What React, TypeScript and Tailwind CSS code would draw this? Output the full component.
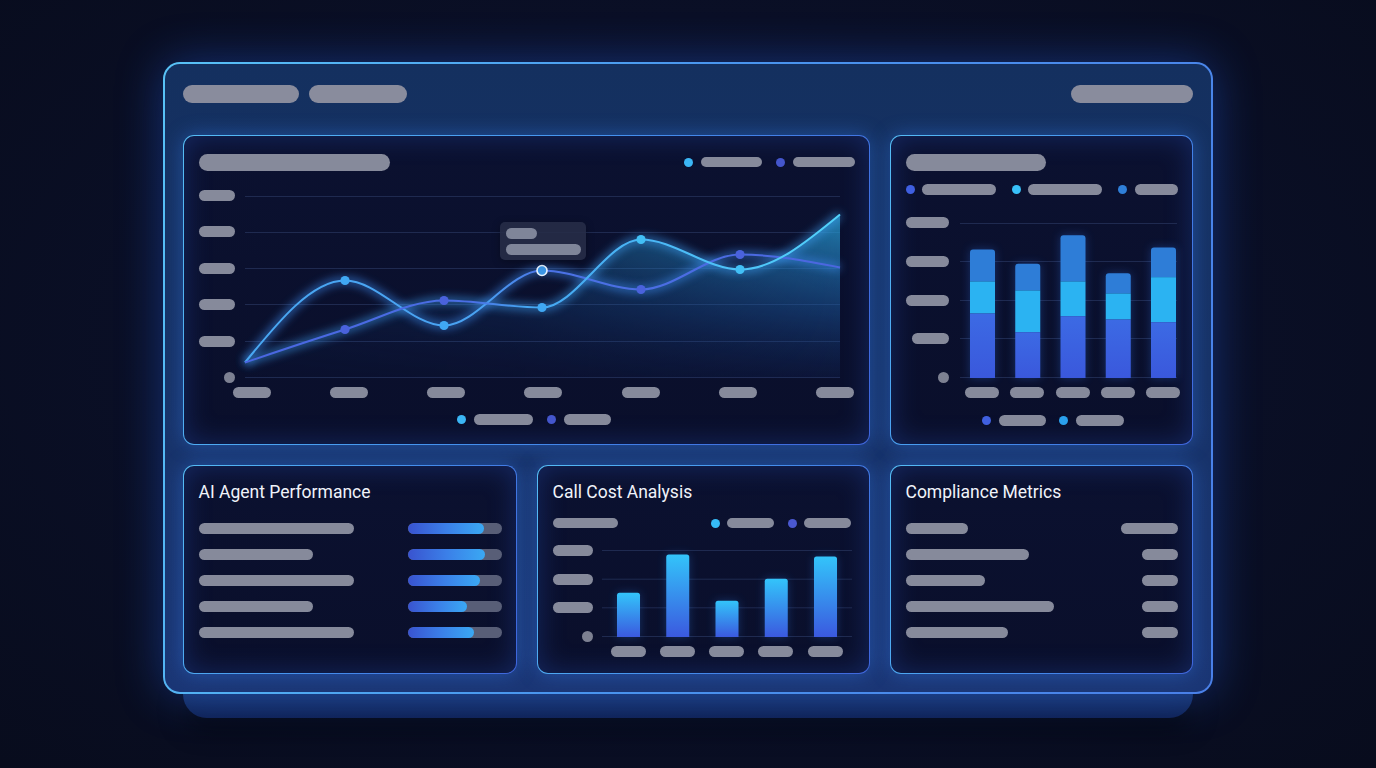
import React from "react";

type Pt = [number, number];

function monotonePath(pts: Pt[]): string {
  const n = pts.length;
  const t: number[] = new Array(n).fill(0);
  const slope = (i: number) => (pts[i + 1][1] - pts[i][1]) / (pts[i + 1][0] - pts[i][0]);
  for (let i = 1; i < n - 1; i++) {
    const h0 = pts[i][0] - pts[i - 1][0];
    const h1 = pts[i + 1][0] - pts[i][0];
    const s0 = slope(i - 1);
    const s1 = slope(i);
    const p = (s0 * h1 + s1 * h0) / (h0 + h1);
    t[i] = (Math.sign(s0) + Math.sign(s1)) * Math.min(Math.abs(s0), Math.abs(s1), 0.5 * Math.abs(p)) || 0;
  }
  t[0] = (3 * slope(0) - t[1]) / 2;
  t[n - 1] = (3 * slope(n - 2) - t[n - 2]) / 2;
  let d = `M${pts[0][0]},${pts[0][1]}`;
  for (let i = 0; i < n - 1; i++) {
    const [x0, y0] = pts[i];
    const [x1, y1] = pts[i + 1];
    const dx = (x1 - x0) / 3;
    d += ` C${x0 + dx},${y0 + dx * t[i]} ${x1 - dx},${y1 - dx * t[i + 1]} ${x1},${y1}`;
  }
  return d;
}

const LINE_A: Pt[] = [
  [0, 172.5],
  [100, 90.5],
  [199, 135.5],
  [297, 80.5],
  [396, 99.5],
  [495, 64.5],
  [595, 77.5],
];
const LINE_B: Pt[] = [
  [0, 172.5],
  [100, 139.5],
  [199, 110.5],
  [297, 117.5],
  [396, 49.5],
  [495, 79.5],
  [595, 24.5],
];

const pill = "rounded-full bg-[#868a9b]";

function Dot({ c }: { c: string }) {
  return <span className={`block h-[9px] w-[9px] shrink-0 rounded-full ${c}`} />;
}

function Panel({ className, children }: { className: string; children: React.ReactNode }) {
  return (
    <div
      className={`rounded-[11px] border-[1.5px] border-transparent [background:linear-gradient(180deg,#0b1130,#0a0f2b)_padding-box,linear-gradient(115deg,#55bdf5,#4592ee_50%,#3f66dc)_border-box] shadow-[0_0_20px_rgba(56,130,246,0.4),inset_0_0_28px_rgba(45,95,220,0.3)] ${className}`}
    >
      {children}
    </div>
  );
}

function LineChart() {
  const a = monotonePath(LINE_A);
  const b = monotonePath(LINE_B);
  const grid = [6.5, 42.5, 78.5, 114.5, 151.5, 187.5];
  return (
    <svg className="absolute inset-0 overflow-visible" width={595} height={193} viewBox="0 0 595 193">
      <defs>
        <linearGradient id="strokeA" gradientUnits="userSpaceOnUse" x1="0" y1="0" x2="595" y2="0">
          <stop offset="0" stopColor="#49a8f3" />
          <stop offset="0.4" stopColor="#49a2f2" />
          <stop offset="0.5" stopColor="#4b72e6" />
          <stop offset="1" stopColor="#4b66df" />
        </linearGradient>
        <linearGradient id="strokeB" gradientUnits="userSpaceOnUse" x1="0" y1="0" x2="595" y2="0">
          <stop offset="0" stopColor="#4a66e2" />
          <stop offset="0.38" stopColor="#4a6ee4" />
          <stop offset="0.47" stopColor="#45a6f2" />
          <stop offset="1" stopColor="#52d2fb" />
        </linearGradient>
        <linearGradient id="areaV" x1="0" y1="0" x2="0" y2="1">
          <stop offset="0" stopColor="#2aa6dc" stopOpacity="0.75" />
          <stop offset="0.6" stopColor="#1d5fa8" stopOpacity="0.45" />
          <stop offset="1" stopColor="#173a80" stopOpacity="0.15" />
        </linearGradient>
        <linearGradient id="areaH" x1="0" y1="0" x2="1" y2="0">
          <stop offset="0" stopColor="#fff" stopOpacity="0.15" />
          <stop offset="0.45" stopColor="#fff" stopOpacity="0.35" />
          <stop offset="1" stopColor="#fff" stopOpacity="1" />
        </linearGradient>
        <mask id="areaMask">
          <rect x="0" y="0" width="595" height="193" fill="url(#areaH)" />
        </mask>
        <filter id="glow" x="-10%" y="-40%" width="120%" height="180%">
          <feGaussianBlur stdDeviation="4" />
        </filter>
      </defs>
      {grid.map((y) => (
        <line key={y} x1="0" x2="595" y1={y} y2={y} stroke="#1f2a50" strokeWidth="1" />
      ))}
      <path d={`${b} L595,187.5 L0,187.5 Z`} fill="url(#areaV)" mask="url(#areaMask)" />
      <path d={a} fill="none" stroke="#3d8cf0" strokeWidth="7" opacity="0.6" filter="url(#glow)" />
      <path d={b} fill="none" stroke="#3d9cf0" strokeWidth="7" opacity="0.6" filter="url(#glow)" />
      <path d={a} fill="none" stroke="url(#strokeA)" strokeWidth="2" />
      <path d={b} fill="none" stroke="url(#strokeB)" strokeWidth="2" />
      <circle cx="100" cy="90.5" r="4.6" fill="#40a8f3" />
      <circle cx="199" cy="135.5" r="4.6" fill="#40a8f3" />
      <circle cx="396" cy="99.5" r="4.6" fill="#4a62dc" />
      <circle cx="495" cy="64.5" r="4.6" fill="#4a62dc" />
      <circle cx="100" cy="139.5" r="4.6" fill="#4a62dc" />
      <circle cx="199" cy="110.5" r="4.6" fill="#4a62dc" />
      <circle cx="297" cy="117.5" r="4.6" fill="#40a8f3" />
      <circle cx="396" cy="49.5" r="4.6" fill="#42c0f6" />
      <circle cx="495" cy="79.5" r="4.6" fill="#42c0f6" />
      <circle cx="297" cy="80.5" r="5" fill="#3b96e6" stroke="#e6f2ff" strokeWidth="1.6" />
    </svg>
  );
}

function roundTop(x: number, top: number, w: number, bottom: number, r: number) {
  return `M${x},${bottom} V${top + r} Q${x},${top} ${x + r},${top} H${x + w - r} Q${x + w},${top} ${x + w},${top + r} V${bottom} Z`;
}

const STACKS = [
  { x: 10, top: 32.5, c: 64.5, b: 96.5 },
  { x: 55.25, top: 46.8, c: 73.5, b: 115.2 },
  { x: 100.5, top: 18.2, c: 64.5, b: 99.2 },
  { x: 145.75, top: 56.2, c: 76.5, b: 102.5 },
  { x: 191, top: 30.5, c: 60.2, b: 105.2 },
];

function StackedChart() {
  const grid = [6.5, 44.5, 83.5, 121.5, 160.5];
  return (
    <svg className="absolute inset-0 overflow-visible" width={217} height={166} viewBox="0 0 217 166">
      <defs>
        <linearGradient id="stackBottom" x1="0" y1="0" x2="0" y2="1">
          <stop offset="0" stopColor="#3c6ae4" />
          <stop offset="1" stopColor="#3a58dc" />
        </linearGradient>
        <filter id="barGlow" x="-50%" y="-20%" width="200%" height="140%">
          <feGaussianBlur stdDeviation="5" />
        </filter>
      </defs>
      {grid.map((y) => (
        <line key={y} x1="0" x2="217" y1={y} y2={y} stroke="#1f2a50" strokeWidth="1" />
      ))}
      {STACKS.map((s, i) => (
        <g key={i}>
          <rect x={s.x} y={s.top} width="25" height={161 - s.top} fill="#2f6fe0" opacity="0.35" filter="url(#barGlow)" />
          <path d={roundTop(s.x, s.top, 25, s.c, 3)} fill="#2e7dd7" />
          <rect x={s.x} y={s.c} width="25" height={s.b - s.c} fill="#2bb3f2" />
          <rect x={s.x} y={s.b} width="25" height={161 - s.b} fill="url(#stackBottom)" />
        </g>
      ))}
    </svg>
  );
}

const COST_BARS = [
  { x: 15, top: 47.8 },
  { x: 64.25, top: 9.5 },
  { x: 113.5, top: 55.8 },
  { x: 162.75, top: 33.8 },
  { x: 212, top: 11.5 },
];

function CostChart() {
  const grid = [5.5, 34.2, 62.8, 91.5];
  return (
    <svg className="absolute inset-0 overflow-visible" width={250} height={97} viewBox="0 0 250 97">
      <defs>
        <linearGradient id="costBar" x1="0" y1="0" x2="0" y2="1">
          <stop offset="0" stopColor="#33c4fa" />
          <stop offset="1" stopColor="#3b59df" />
        </linearGradient>
        <filter id="costGlow" x="-50%" y="-20%" width="200%" height="140%">
          <feGaussianBlur stdDeviation="5" />
        </filter>
      </defs>
      {grid.map((y) => (
        <line key={y} x1="0" x2="250" y1={y} y2={y} stroke="#1f2a50" strokeWidth="1" />
      ))}
      {COST_BARS.map((b, i) => (
        <g key={i}>
          <rect x={b.x} y={b.top} width="23" height={92 - b.top} fill="#2f7fe8" opacity="0.3" filter="url(#costGlow)" />
          <path d={roundTop(b.x, b.top, 23, 92, 2.5)} fill="url(#costBar)" />
        </g>
      ))}
    </svg>
  );
}

function TrendPanel() {
  return (
    <Panel className="col-span-2 h-[310px] px-[14.5px] pt-[17.5px]">
      <div className="flex h-[17px] items-center justify-between">
        <div className={`h-[17px] w-[191px] ${pill}`} />
        <div className="flex items-center">
          <Dot c="bg-[#3bb6f5]" />
          <div className={`ml-[7.5px] h-[10.5px] w-[61px] ${pill}`} />
          <span className="ml-[14.5px]" />
          <Dot c="bg-[#4456cc]" />
          <div className={`ml-[7.5px] h-[10.5px] w-[62px] ${pill}`} />
        </div>
      </div>
      <div className="mt-[19.5px] flex h-[193px]">
        <div className="flex w-[36px] flex-col items-end justify-between">
          <div className={`h-[11px] w-[36px] ${pill}`} />
          <div className={`h-[11px] w-[36px] ${pill}`} />
          <div className={`h-[11px] w-[36px] ${pill}`} />
          <div className={`h-[11px] w-[36px] ${pill}`} />
          <div className={`h-[11px] w-[36px] ${pill}`} />
          <div className="h-[11px] w-[11px] rounded-full bg-[#7d8192]" />
        </div>
        <div className="relative ml-[10px] h-[193px] w-[595px]">
          <LineChart />
          <div className="absolute left-[255px] top-[32px] h-[38px] w-[86px] rounded-[5px] bg-[#262c47]/90 px-[6px] pt-[6px] shadow-[0_2px_8px_rgba(0,0,0,0.3)]">
            <div className="h-[10.5px] w-[31px] rounded-full bg-[#7f8599]" />
            <div className="mt-[5.5px] h-[10.5px] w-[75px] rounded-full bg-[#7f8599]" />
          </div>
        </div>
      </div>
      <div className="ml-[34px] mt-[4px] flex h-[11px] justify-between">
        {["a", "b", "c", "d", "e", "f", "g"].map((k) => (
          <div key={k} className={`h-[11px] w-[38px] ${pill}`} />
        ))}
      </div>
      <div className="mt-[16px] flex items-center justify-center pl-[15px]">
        <Dot c="bg-[#3bb6f5]" />
        <div className={`ml-[7.5px] h-[10.5px] w-[59px] ${pill}`} />
        <span className="ml-[14.5px]" />
        <Dot c="bg-[#4456cc]" />
        <div className={`ml-[7.5px] h-[10.5px] w-[47px] ${pill}`} />
      </div>
    </Panel>
  );
}

function StackPanel() {
  return (
    <Panel className="h-[310px] px-[14.5px] pt-[17.5px]">
      <div className={`h-[17px] w-[140px] ${pill}`} />
      <div className="mt-[13.5px] flex h-[11px] items-center justify-between">
        <div className="flex items-center">
          <Dot c="bg-[#3f5fe0]" />
          <div className={`ml-[7.5px] h-[10.5px] w-[74px] ${pill}`} />
        </div>
        <div className="flex items-center">
          <Dot c="bg-[#38c0f8]" />
          <div className={`ml-[7.5px] h-[10.5px] w-[74px] ${pill}`} />
        </div>
        <div className="flex items-center">
          <Dot c="bg-[#2f7fd8]" />
          <div className={`ml-[7.5px] h-[10.5px] w-[43px] ${pill}`} />
        </div>
      </div>
      <div className="mt-[22px] flex h-[166px]">
        <div className="flex w-[43px] flex-col items-end justify-between">
          <div className={`h-[11px] w-[43px] ${pill}`} />
          <div className={`h-[11px] w-[43px] ${pill}`} />
          <div className={`h-[11px] w-[43px] ${pill}`} />
          <div className={`h-[11px] w-[37px] ${pill}`} />
          <div className="h-[11px] w-[11px] rounded-full bg-[#7d8192]" />
        </div>
        <div className="relative ml-[11px] h-[166px] w-[217px]">
          <StackedChart />
        </div>
      </div>
      <div className="ml-[54px] mt-[4px] flex h-[11px] w-[217px] justify-between pl-[10px] pr-[1px]">
        {["a", "b", "c", "d", "e"].map((k) => (
          <div key={k} className="flex w-[25px] justify-center">
            <div className={`h-[11px] w-[34px] shrink-0 ${pill}`} />
          </div>
        ))}
      </div>
      <div className="mt-[17px] flex items-center justify-center pl-[23px]">
        <Dot c="bg-[#4060e0]" />
        <div className={`ml-[7.5px] h-[10.5px] w-[47px] ${pill}`} />
        <span className="ml-[13.5px]" />
        <Dot c="bg-[#2aa0ec]" />
        <div className={`ml-[7.5px] h-[10.5px] w-[48px] ${pill}`} />
      </div>
    </Panel>
  );
}

const titleCls =
  "h-[20px] font-['Roboto','Inter',sans-serif] text-[17.5px] font-normal leading-[20px] text-[#f0f3fa]";

const AGENT_ROWS = [
  { label: "w-[155px]", fill: 76 },
  { label: "w-[114px]", fill: 77 },
  { label: "w-[155px]", fill: 72 },
  { label: "w-[114px]", fill: 59 },
  { label: "w-[155px]", fill: 66 },
];

function AgentPanel() {
  return (
    <Panel className="h-[209px] px-[14.5px] pt-[15.5px]">
      <div className={titleCls}>AI Agent Performance</div>
      <div className="mt-[21.5px] flex flex-col gap-[15px]">
        {AGENT_ROWS.map((r, i) => (
          <div key={i} className="flex h-[11px] items-center justify-between">
            <div className={`h-[10.5px] ${r.label} ${pill}`} />
            <div className="h-[10.5px] w-[94px] overflow-hidden rounded-full bg-[#585e77]">
              <div
                className="h-full rounded-full bg-gradient-to-r from-[#3953cf] via-[#3b7fe8] to-[#3aa8f3]"
                style={{ width: `${r.fill}px` }}
              />
            </div>
          </div>
        ))}
      </div>
    </Panel>
  );
}

function CostPanel() {
  return (
    <Panel className="h-[209px] px-[14.5px] pt-[15.5px]">
      <div className={titleCls}>Call Cost Analysis</div>
      <div className="mt-[16px] flex h-[11px] items-center justify-between pr-[3.5px]">
        <div className={`h-[10.5px] w-[65px] ${pill}`} />
        <div className="flex items-center">
          <Dot c="bg-[#36bbf6]" />
          <div className={`ml-[7px] h-[10.5px] w-[47px] ${pill}`} />
          <span className="ml-[14px]" />
          <Dot c="bg-[#4a58d0]" />
          <div className={`ml-[7px] h-[10.5px] w-[47px] ${pill}`} />
        </div>
      </div>
      <div className="mt-[16.5px] flex h-[97px]">
        <div className="flex w-[40px] flex-col items-end justify-between">
          <div className={`h-[11px] w-[40px] ${pill}`} />
          <div className={`h-[11px] w-[40px] ${pill}`} />
          <div className={`h-[11px] w-[40px] ${pill}`} />
          <div className="h-[11px] w-[11px] rounded-full bg-[#7d8192]" />
        </div>
        <div className="relative ml-[9px] h-[97px] w-[250px]">
          <CostChart />
        </div>
      </div>
      <div className="ml-[49px] mt-[4px] flex h-[11px] w-[250px] justify-between px-[15px]">
        {["a", "b", "c", "d", "e"].map((k) => (
          <div key={k} className="flex w-[23px] justify-center">
            <div className={`h-[11px] w-[35px] shrink-0 ${pill}`} />
          </div>
        ))}
      </div>
    </Panel>
  );
}

const COMPLIANCE_ROWS = [
  { l: "w-[62px]", r: "w-[57px]" },
  { l: "w-[123px]", r: "w-[36px]" },
  { l: "w-[79px]", r: "w-[36px]" },
  { l: "w-[148px]", r: "w-[36px]" },
  { l: "w-[102px]", r: "w-[36px]" },
];

function CompliancePanel() {
  return (
    <Panel className="h-[209px] px-[14.5px] pt-[15.5px]">
      <div className={titleCls}>Compliance Metrics</div>
      <div className="mt-[21.5px] flex flex-col gap-[15px]">
        {COMPLIANCE_ROWS.map((r, i) => (
          <div key={i} className="flex h-[11px] items-center justify-between">
            <div className={`h-[10.5px] ${r.l} ${pill}`} />
            <div className={`h-[10.5px] ${r.r} ${pill}`} />
          </div>
        ))}
      </div>
    </Panel>
  );
}

export default function App() {
  return (
    <div className="flex min-h-[768px] w-full flex-col items-center bg-[#0a0f24] bg-[radial-gradient(ellipse_at_50%_45%,#0f173a_0%,#0a0f26_55%,#080c1d_100%)] pt-[62px] font-['Inter','Noto_Sans',sans-serif]">
      <div className="relative w-[1050px]">
        <div className="relative z-10 h-[632px] w-[1050px] rounded-[17px] border-2 border-transparent p-[18px] [background:linear-gradient(180deg,#14305f,#173267_50%,#1b3675)_padding-box,linear-gradient(105deg,#58c2f6,#4a96ee_45%,#4a80e8)_border-box] shadow-[0_0_46px_rgba(37,99,235,0.4)]">
          <div className="mt-[3px] flex h-[18px] items-center justify-between">
            <div className="flex gap-[10px]">
              <div className="h-[18px] w-[116px] rounded-full bg-[#898c9d]" />
              <div className="h-[18px] w-[98px] rounded-full bg-[#898c9d]" />
            </div>
            <div className="h-[18px] w-[122px] rounded-full bg-[#898c9d]" />
          </div>
          <div className="mt-[32px] grid grid-cols-[334px_333px_303px] gap-[20px]">
            <TrendPanel />
            <StackPanel />
            <AgentPanel />
            <CostPanel />
            <CompliancePanel />
          </div>
        </div>
        <div className="mx-[20px] h-[24px] rounded-b-[24px] bg-gradient-to-b from-[#193469] to-[#0f2153] shadow-[0_10px_24px_rgba(0,0,0,0.5)]" />
      </div>
    </div>
  );
}
